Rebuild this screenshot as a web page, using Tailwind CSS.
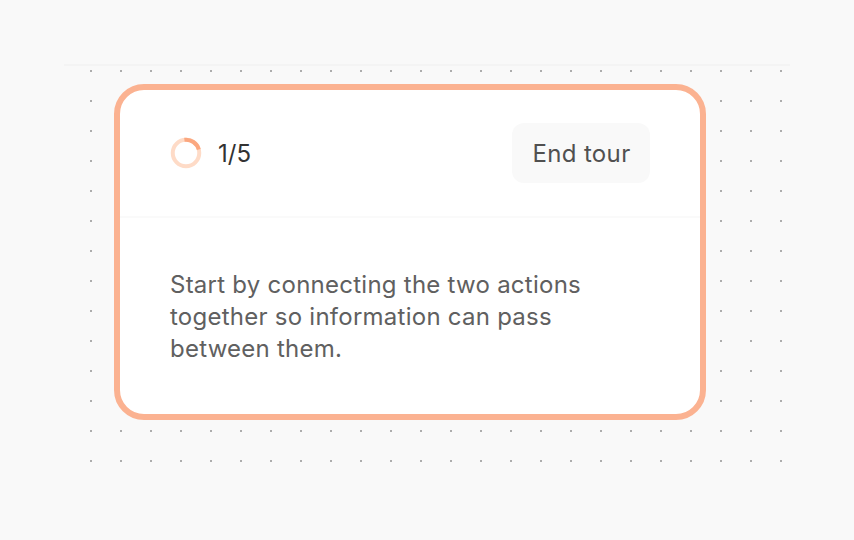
<!doctype html>
<html>
<head>
<meta charset="utf-8">
<script src="https://cdn.jsdelivr.net/npm/@tailwindcss/browser@4"></script>
</head>
<body class="m-0 bg-[#f9f9f9]">
<div class="relative w-[854px] h-[540px] overflow-hidden bg-[#f9f9f9] font-['Inter',sans-serif]">
  <div class="absolute left-[64px] top-[64px] w-[726px] h-[2px] bg-[#f4f4f4]"></div>
  <svg class="absolute left-[90px] top-[70px]" width="692" height="392" aria-hidden="true">
    <defs><pattern id="d" width="30" height="30" patternUnits="userSpaceOnUse"><rect width="2" height="2" fill="#adadad"/></pattern></defs>
    <rect width="692" height="392" fill="url(#d)"/>
  </svg>
  <div class="absolute left-[114px] top-[84px] w-[592px] h-[336px] box-border border-[6px] border-[#fbb291] rounded-[30px] bg-white flex flex-col">
    <div class="h-[128px] shrink-0 border-b-2 border-[#fafafa] flex items-center justify-between pl-[50px] pr-[50px]">
      <div class="flex items-center gap-[16px]">
        <svg width="32" height="32" viewBox="0 0 32 32" fill="none">
          <circle cx="16" cy="16" r="13.25" stroke="#fedbc7" stroke-width="4"/>
          <path d="M14.4 2.85A13.25 13.25 0 0 1 28.8 12.5" stroke="#fba77f" stroke-width="4"/>
        </svg>
        <span class="text-[24px] leading-[32px] pt-[1px] text-[#333333]">1/5</span>
      </div>
      <div class="w-[138px] h-[60px] rounded-[12px] bg-[#f9f9f9] flex items-center justify-center pt-[1px] pl-[1px] text-[24px] leading-[32px] tracking-[0.36px] text-[#505050]">End tour</div>
    </div>
    <p class="m-0 pl-[50px] pr-[50px] pt-[51px] text-[24px] leading-[32px] tracking-[0.25px] text-[#606060]">Start by connecting the two actions<br>together so information can pass<br>between them.</p>
  </div>
</div>
</body>
</html>
